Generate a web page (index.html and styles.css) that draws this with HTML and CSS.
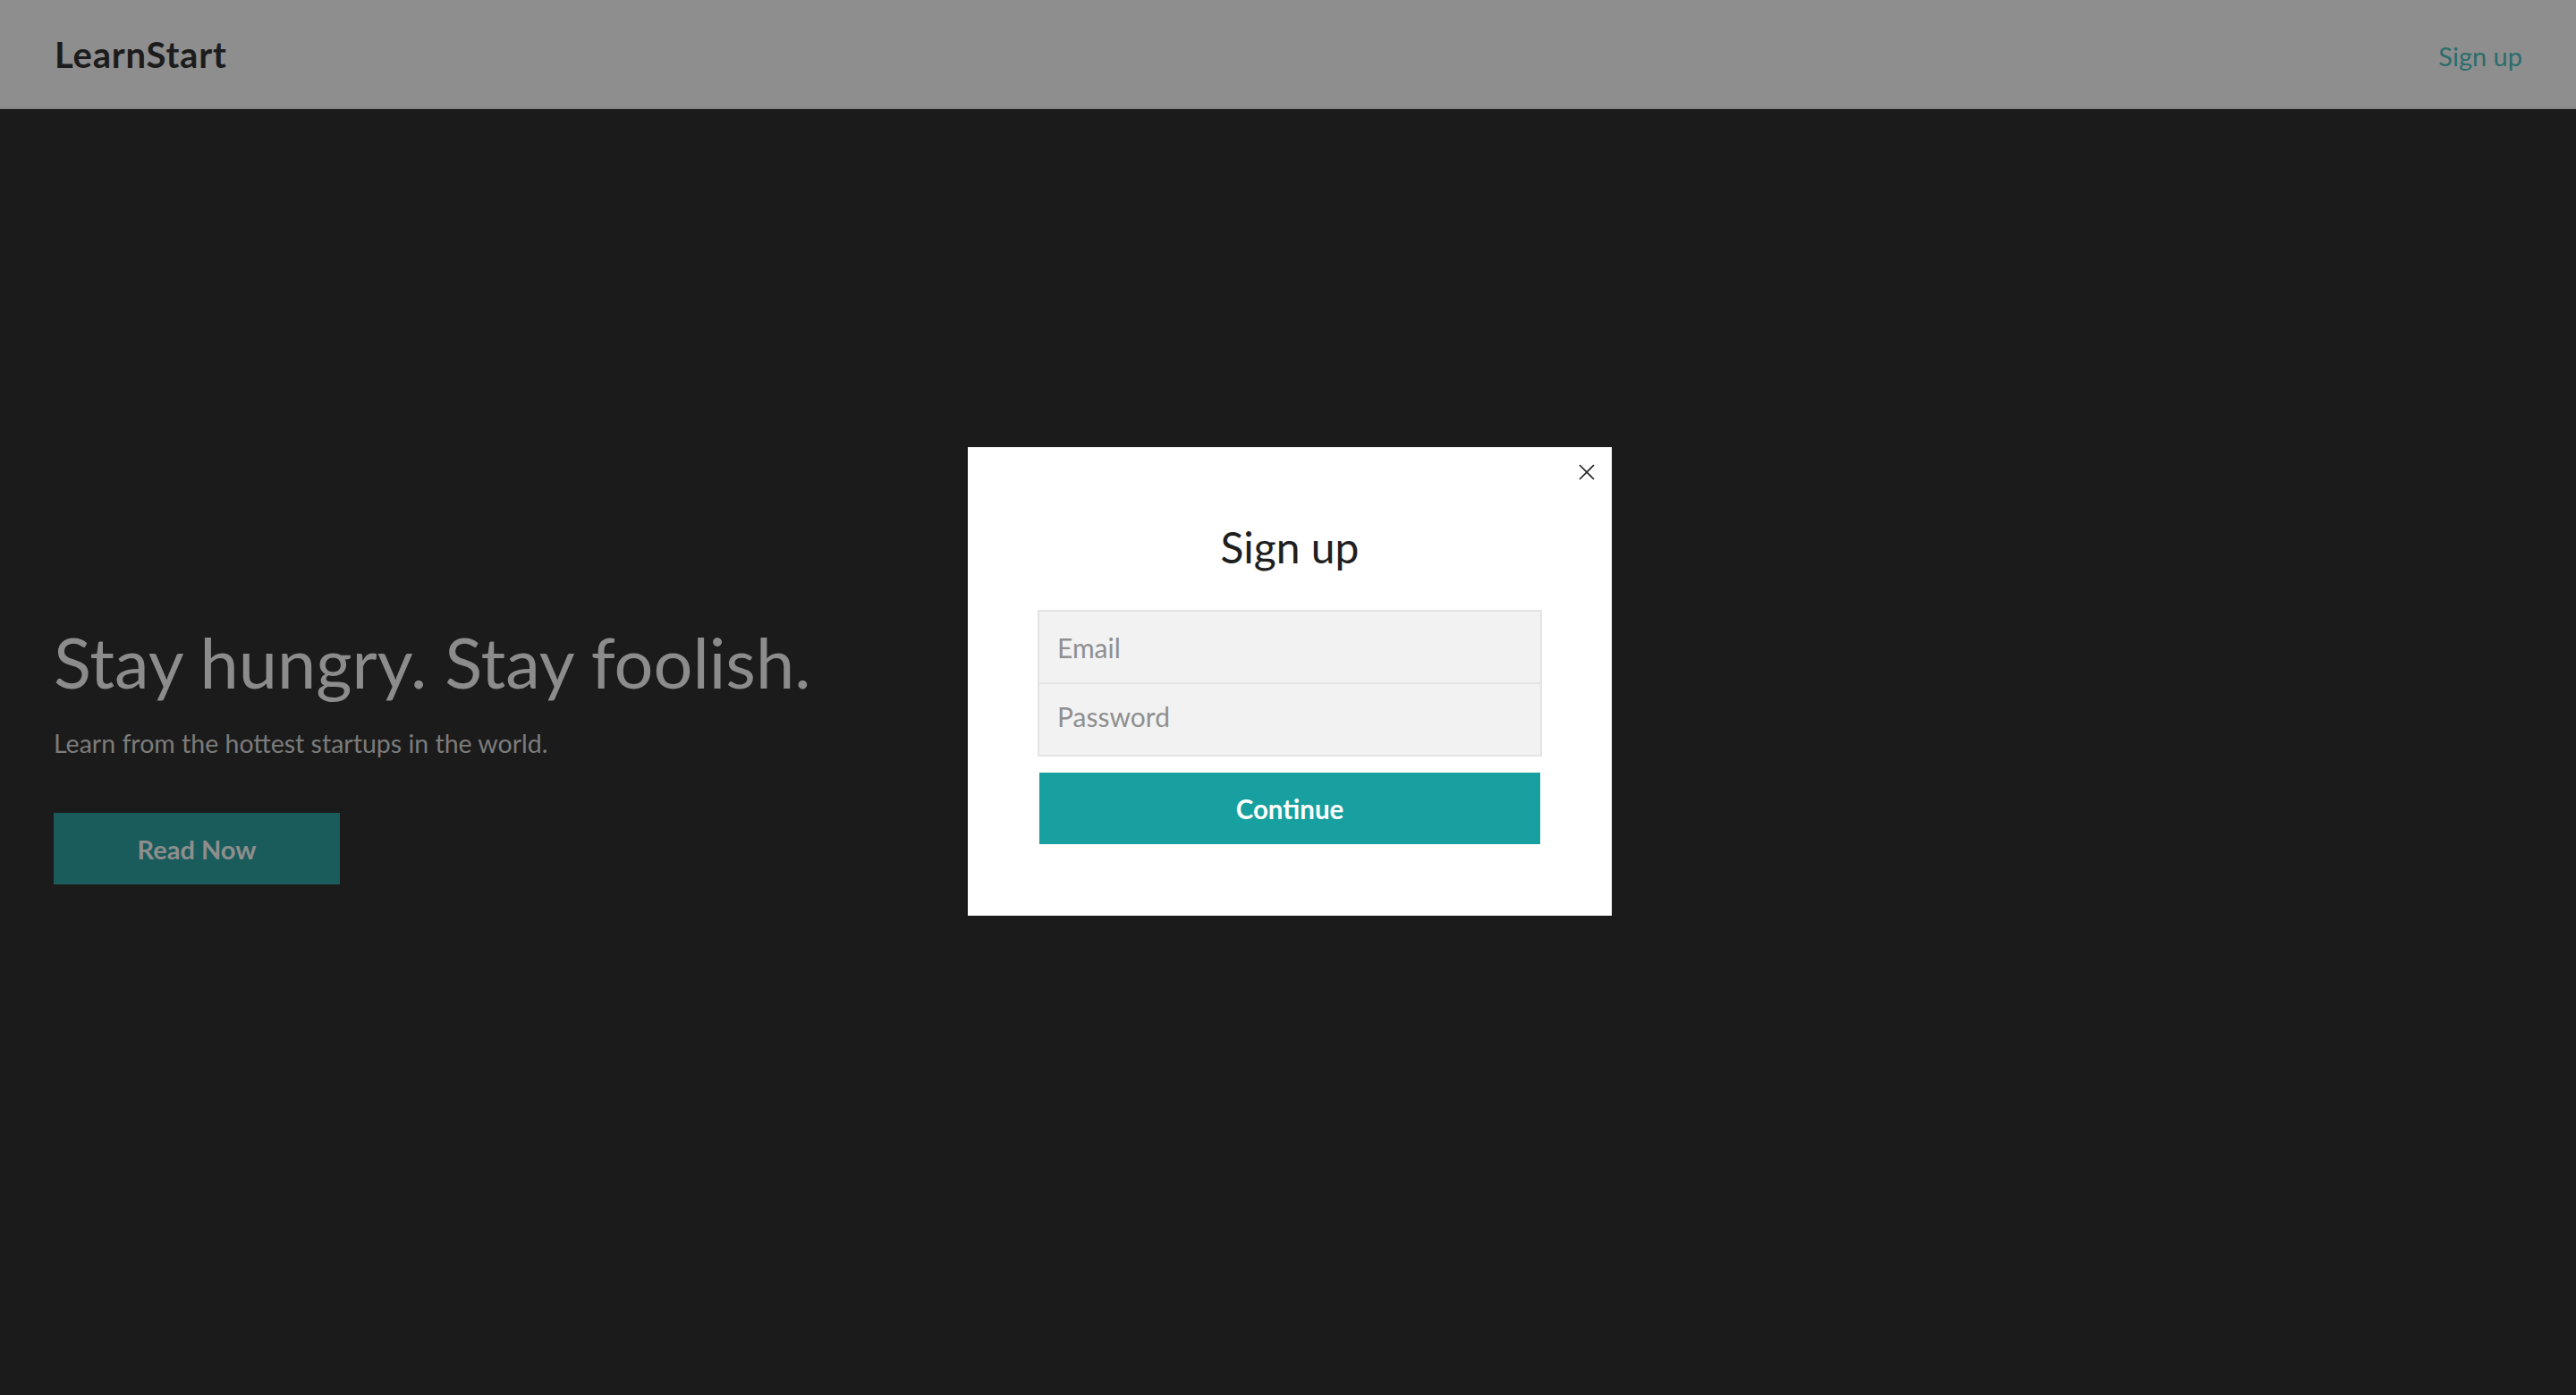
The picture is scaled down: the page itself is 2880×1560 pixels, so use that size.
FILE: index.html
```html
<!DOCTYPE html>
<html lang="en">
<head>
<meta charset="utf-8">
<title>LearnStart</title>
<link rel="stylesheet" href="styles.css">
</head>
<body>
<header class="topbar">
  <div class="logo">LearnStart</div>
  <a class="topbar-link" href="#">Sign up</a>
</header>
<main class="hero">
  <h1 class="hero-title">Stay hungry. Stay foolish.</h1>
  <p class="hero-sub">Learn from the hottest startups in the world.</p>
  <a class="hero-btn" href="#">Read Now</a>
</main>
<div class="modal">
  <button class="modal-close" aria-label="Close">
    <svg width="18" height="18" viewBox="0 0 18 18"><path d="M1 1 L17 17 M17 1 L1 17" stroke="#222" stroke-width="1.6" fill="none"/></svg>
  </button>
  <h2 class="modal-title">Sign up</h2>
  <form class="modal-form">
    <div class="field-group">
      <input class="field" type="email" placeholder="Email">
      <input class="field field-last" type="password" placeholder="Password">
    </div>
    <button class="submit" type="button">Continue</button>
  </form>
</div>
</body>
</html>
```
FILE: styles.css
```css
* { box-sizing: border-box; }
html, body { margin: 0; padding: 0; }
body {
  background: #1b1b1b;
  font-family: Lato, "Open Sans", sans-serif;
  width: 2880px;
  height: 1560px;
  overflow: hidden;
  position: relative;
}
.topbar {
  height: 122px;
  background: #8e8e8e;
  border-bottom: 2px solid #878787;
  display: flex;
  align-items: center;
  justify-content: space-between;
  padding: 2px 60px 0 61px;
}
.logo {
  font-size: 40px;
  font-weight: 700;
  color: #1c1c1c;
  line-height: 1;
  letter-spacing: 0.8px;
}
.topbar-link {
  font-size: 29px;
  color: #2a6d6b;
  text-decoration: none;
  line-height: 1;
  padding-top: 2px;
}
.hero {
  padding: 580px 0 0 60px;
}
.hero-title {
  margin: 0;
  font-size: 77.5px;
  line-height: 1;
  font-weight: 400;
  color: #8c8c8c;
}
.hero-sub {
  margin: 37px 0 0;
  font-size: 28.5px;
  line-height: 1;
  color: #7c7c7c;
}
.hero-btn {
  margin-top: 64px;
  width: 320px;
  height: 80px;
  background: #1a5c5b;
  color: #8e8e8e;
  font-size: 29px;
  font-weight: 700;
  text-decoration: none;
  display: flex;
  align-items: center;
  justify-content: center;
}
.modal {
  position: absolute;
  top: 500px;
  left: 1082px;
  width: 720px;
  background: #fff;
  padding: 88px 78px 80px;
}
.modal-close {
  position: absolute;
  top: 19px;
  right: 19px;
  width: 18px;
  height: 18px;
  padding: 0;
  border: 0;
  background: none;
  display: block;
}
.modal-close svg { display: block; }
.modal-title {
  margin: 0 0 46px;
  text-align: center;
  font-size: 48px;
  line-height: 1;
  font-weight: 400;
  color: #1f1f1f;
}
.modal-form {
  display: flex;
  flex-direction: column;
}
.field-group {
  display: flex;
  flex-direction: column;
  border: 2px solid #e4e4e4;
}
.field {
  height: 81px;
  border: 0;
  border-bottom: 2px solid #e4e4e4;
  background: #f2f2f2;
  padding: 0 20px;
  font-family: Lato, "Open Sans", sans-serif;
  font-size: 30px;
  color: #333;
  outline: none;
}
.field-last {
  height: 79px;
  border-bottom: 0;
  padding: 0 20px 7px;
}
.field::placeholder { color: #8f8f8f; }
.submit {
  margin: 18px 2px 0;
  height: 80px;
  border: 0;
  background: #17a09f;
  color: #fff;
  font-family: Lato, "Open Sans", sans-serif;
  font-size: 29.5px;
  font-weight: 700;
}
```
